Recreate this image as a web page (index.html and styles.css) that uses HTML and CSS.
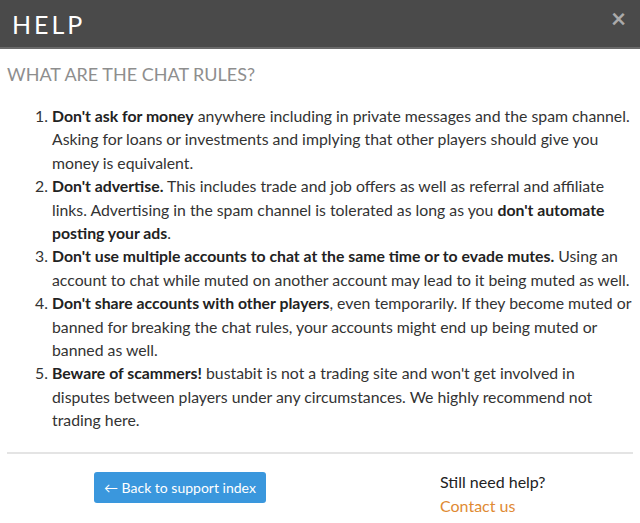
FILE: index.html
```html
<!DOCTYPE html>
<html lang="en">
<head>
  <meta charset="UTF-8" />
  <title>Help</title>
  <link rel="stylesheet" href="styles.css">
</head>
<body>
  <div class="modal">
    <div class="modal-header">
      <h1>HELP</h1>
      <span class="close">&times;</span>
    </div>

    <div class="modal-body">
      <h2>WHAT ARE THE CHAT RULES?</h2>
      <ol class="rules">
        <li><strong>Don't ask for money</strong> anywhere including in private messages and the spam channel. Asking for loans or investments and implying that other players should give you money is equivalent.</li>
        <li><strong>Don't advertise.</strong> This includes trade and job offers as well as referral and affiliate links. Advertising in the spam channel is tolerated as long as you <strong>don't automate posting your ads</strong>.</li>
        <li><strong>Don't use multiple accounts to chat at the same time or to evade mutes.</strong> Using an account to chat while muted on another account may lead to it being muted as well.</li>
        <li><strong>Don't share accounts with other players</strong>, even temporarily. If they become muted or banned for breaking the chat rules, your accounts might end up being muted or banned as well.</li>
        <li><strong>Beware of scammers!</strong> bustabit is not a trading site and won't get involved in disputes between players under any circumstances. We highly recommend not trading here.</li>
      </ol>
    </div>

    <div class="modal-footer">
      <div class="footer-left">
        <button class="back-btn">&larr; Back to support index</button>
      </div>
      <div class="footer-right">
        <p class="still">Still need help?</p>
        <a class="contact" href="#">Contact us</a>
      </div>
    </div>
  </div>
</body>
</html>
```

FILE: styles.css
```css
body {
  margin: 0;
  padding: 0;
  font-family: Lato, "Open Sans", sans-serif;
  background: #fff;
  color: #333;
}

.modal {
  width: 640px;
}

.modal-header {
  display: flex;
  justify-content: space-between;
  align-items: center;
  height: 47px;
  padding: 0 12px;
  background: #4a4a4a;
  border-bottom: 2px solid #6a6a6a;
}

.modal-header h1 {
  margin: 0;
  font-size: 25px;
  font-weight: 400;
  letter-spacing: 3px;
  color: #fff;
}

.close {
  font-size: 26px;
  font-weight: bold;
  color: #aaa;
  line-height: 1;
  margin-top: -12px;
  margin-right: 2px;
}

.modal-body {
  padding: 0 7px;
}

.modal-body h2 {
  margin: 14px 0 19px;
  font-size: 18px;
  font-weight: 400;
  color: #8e8e8e;
}

.rules {
  margin: 0;
  padding: 0 0 0 45px;
  font-size: 15.8px;
  line-height: 23.4px;
  color: #333;
}

.rules strong {
  color: #222;
}

.modal-footer {
  display: flex;
  margin: 20px 7px 0;
  padding-top: 16px;
  border-top: 2px solid #e4e4e4;
}

.footer-left {
  width: 433px;
  padding-left: 87px;
  box-sizing: border-box;
}

.back-btn {
  margin-top: 2px;
  padding: 0 10px;
  height: 31px;
  white-space: nowrap;
  background: #3a97dd;
  border: none;
  border-radius: 3px;
  color: #fff;
  font-family: Lato, sans-serif;
  font-size: 14px;
}

.footer-right {
  display: flex;
  flex-direction: column;
  align-items: flex-start;
}

.still {
  margin: 0;
  font-size: 16px;
  line-height: 24px;
  color: #222;
}

.contact {
  font-size: 16px;
  line-height: 24px;
  color: #e08a33;
  text-decoration: none;
}
```
